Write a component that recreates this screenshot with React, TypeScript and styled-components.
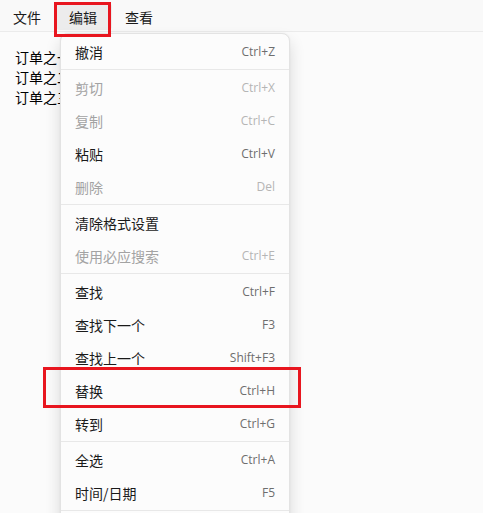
import React from "react";
import styled, { createGlobalStyle } from "styled-components";

const Global = createGlobalStyle`
  html, body { margin: 0; padding: 0; }
  body {
    width: 483px; height: 513px; overflow: hidden;
    background: #fbfbfb;
    font-family: "Noto Sans CJK SC", "Noto Sans", sans-serif;
  }
`;

const Page = styled.div`
  position: relative;
  width: 483px;
  height: 513px;
  overflow: hidden;
  background: #fbfbfb;
`;

const MenuBar = styled.div`
  display: flex;
  align-items: stretch;
  height: 31px;
  border-bottom: 1px solid #ebebeb;
  background: #f9f9f9;
`;

const BarItem = styled.div<{ $active?: boolean }>`
  display: flex;
  align-items: center;
  padding: 0 15px 0 13px;
  margin: 3px 0 1px;
  font-size: 14px;
  color: #1b1b1b;
  border-radius: 4px;
  background: ${(p) => (p.$active ? "#ececec" : "transparent")};
`;

const Editor = styled.div`
  padding: 15px 15px;
  font-size: 14px;
  line-height: 20px;
  color: #000;
`;

const Menu = styled.div`
  position: absolute;
  left: 60px;
  top: 33px;
  width: 228px;
  padding: 1px 0 40px;
  background: #fcfcfc;
  border: 1px solid #e3e3e3;
  border-radius: 8px;
  box-shadow: 0 8px 16px rgba(0, 0, 0, 0.14), 0 0 2px rgba(0, 0, 0, 0.06);
`;

const Row = styled.div<{ $disabled?: boolean }>`
  display: flex;
  align-items: center;
  justify-content: space-between;
  height: 33px;
  padding: 0 14px;
  font-size: 14px;
  color: ${(p) => (p.$disabled ? "#a3a3a3" : "#1a1a1a")};
`;

const Shortcut = styled.span<{ $disabled?: boolean }>`
  font-family: "Segoe UI", "Open Sans", "Noto Sans", sans-serif;
  font-size: 12px;
  color: ${(p) => (p.$disabled ? "#b5b5b5" : "#6e6e6e")};
`;

const Sep = styled.div`
  height: 1px;
  margin: 1px 0 1px;
  background: #e8e8e8;
`;

const Mark = styled.div`
  position: absolute;
  border: 3px solid #e8161f;
  box-sizing: border-box;
  pointer-events: none;
`;

type Item = { label: string; key: string; disabled?: boolean } | "sep";

const items: Item[] = [
  { label: "撤消", key: "Ctrl+Z" },
  "sep",
  { label: "剪切", key: "Ctrl+X", disabled: true },
  { label: "复制", key: "Ctrl+C", disabled: true },
  { label: "粘贴", key: "Ctrl+V" },
  { label: "删除", key: "Del", disabled: true },
  "sep",
  { label: "清除格式设置", key: "" },
  { label: "使用必应搜索", key: "Ctrl+E", disabled: true },
  "sep",
  { label: "查找", key: "Ctrl+F" },
  { label: "查找下一个", key: "F3" },
  { label: "查找上一个", key: "Shift+F3" },
  { label: "替换", key: "Ctrl+H" },
  { label: "转到", key: "Ctrl+G" },
  "sep",
  { label: "全选", key: "Ctrl+A" },
  { label: "时间/日期", key: "F5" },
  "sep",
];

export default function App() {
  return (
    <Page>
      <Global />
      <MenuBar>
        <BarItem>文件</BarItem>
        <BarItem $active>编辑</BarItem>
        <BarItem>查看</BarItem>
      </MenuBar>
      <Editor>
        <div>订单之一</div>
        <div>订单之二</div>
        <div>订单之三</div>
      </Editor>
      <Menu>
        {items.map((it, i) =>
          it === "sep" ? (
            <Sep key={i} />
          ) : (
            <Row key={i} $disabled={it.disabled}>
              <span>{it.label}</span>
              <Shortcut $disabled={it.disabled}>{it.key}</Shortcut>
            </Row>
          )
        )}
      </Menu>
      <Mark style={{ left: 54, top: 2, width: 57, height: 35 }} />
      <Mark style={{ left: 43, top: 367, width: 258, height: 41 }} />
    </Page>
  );
}
